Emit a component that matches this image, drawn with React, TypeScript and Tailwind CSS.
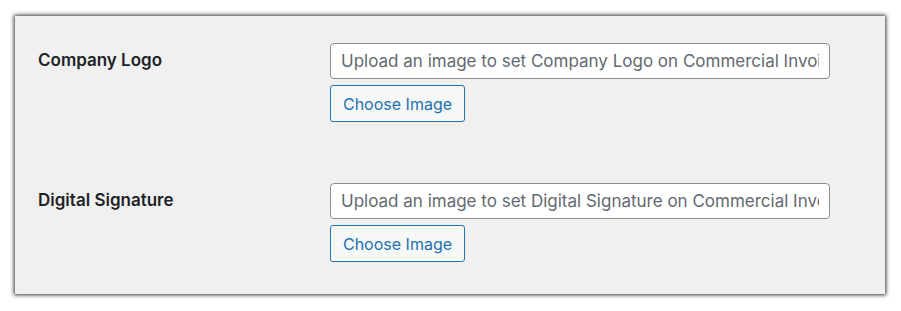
import React from "react";

function Row({ label, placeholder }: { label: string; placeholder: string }) {
  return (
    <div className="flex">
      <div className="w-[292px] shrink-0 pt-[6px] text-[17px] leading-[22px] font-semibold text-[#1d2327]">
        {label}
      </div>
      <div className="flex flex-col gap-[6px]">
        <input
          readOnly
          placeholder={placeholder}
          className="w-[500px] h-[36px] rounded-[4px] border border-[#8c8f94] bg-white px-[10px] text-[17px] text-[#2c3338] placeholder:text-[#646970] outline-none"
          style={{ fontFamily: "Inter, 'Noto Sans', sans-serif" }}
        />
        <button className="self-start h-[37px] w-[135px] rounded-[3px] border border-[#2271b1] bg-[#f6f7f7] text-[16px] text-[#2271b1]">
          Choose Image
        </button>
      </div>
    </div>
  );
}

export default function App() {
  return (
    <div className="w-[901px] h-[311px] bg-white pt-[16px] pl-[15px]" style={{ fontFamily: "Inter, 'Noto Sans', sans-serif" }}>
      <div className="w-[870px] h-[278px] bg-[#f0f0f0] shadow-[0_0_4px_1px_rgba(0,0,0,0.8)] pl-[23px] pt-[27px] flex flex-col gap-[61px]">
        <Row label="Company Logo" placeholder="Upload an image to set Company Logo on Commercial Invoice" />
        <Row label="Digital Signature" placeholder="Upload an image to set Digital Signature on Commercial Invoice" />
      </div>
    </div>
  );
}
